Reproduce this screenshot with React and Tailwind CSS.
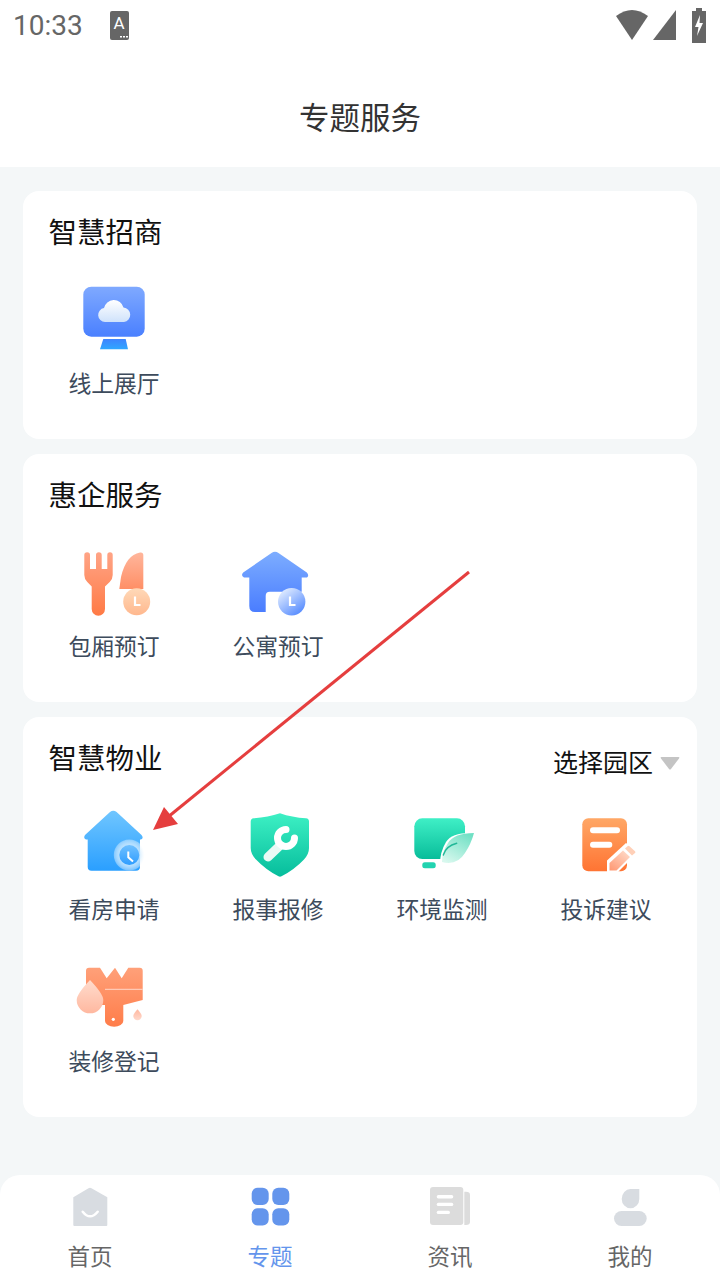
const Grad = ({ id, a, b, x1 = 0.5, y1 = 0, x2 = 0.5, y2 = 1 }) => (
  <linearGradient id={id} x1={x1} y1={y1} x2={x2} y2={y2}>
    <stop offset="0" stopColor={a} />
    <stop offset="1" stopColor={b} />
  </linearGradient>
);

const Box = ({ children, defs }) => (
  <svg width="80" height="80" viewBox="0 0 80 80" className="block">
    <defs>{defs}</defs>
    {children}
  </svg>
);

const Monitor = () => (
  <Box defs={<>
    <Grad id="m1" a="#7fa9ff" b="#4a80ff" />
    <Grad id="m2" a="#ffffff" b="#cfe2fb" />
    <Grad id="m3" a="#3f83ff" b="#2fa8ff" />
  </>}>
    <rect x="9.3" y="10.7" width="61.4" height="50" rx="8" fill="url(#m1)" />
    <path d="M31 46a7 7 0 0 1-1-13.9 10 10 0 0 1 19.5-.6 7.3 7.3 0 0 1 .5 14.5z" fill="url(#m2)" />
    <path d="M29.3 63h22.4l2.3 10.3H26z" fill="url(#m3)" />
  </Box>
);

const Cutlery = () => (
  <Box defs={<>
    <Grad id="c1" a="#ffa486" b="#ff7a45" />
    <Grad id="c2" a="#ffb69c" b="#ff8f66" />
    <Grad id="c3" a="#ffd9b8" b="#ffb88e" />
  </>}>
    <path d="M10.3 16a2.85 2.85 0 0 1 5.7 0V30h6V16a2.85 2.85 0 0 1 5.7 0V30h5.6V16a2.7 2.7 0 0 1 5.4 0V36q0 4-3 7l-4.7 4.5V70a6.65 6.65 0 0 1-13.3 0V47.5L13.3 43q-3-3-3-7z" fill="url(#c1)" />
    <path d="M66 13.5Q52 16 47 38L45.3 50H69.3V16q0-3-3.3-2.5z" fill="url(#c2)" />
    <circle cx="62.7" cy="62.7" r="13.5" fill="url(#c3)" />
    <path d="M61 57.5V66h5.5" fill="none" stroke="#fff" strokeWidth="2.2" />
  </Box>
);

const HouseBlue = () => (
  <Box defs={<>
    <Grad id="h1" a="#7dadff" b="#4a7dff" />
    <Grad id="h2" a="#dbe8ff" b="#5b8fff" x1="0.2" y1="0.1" x2="0.8" y2="0.9" />
  </>}>
    <path d="M33.5 14Q37 11.5 40.5 14L68.8 33.5Q71.5 36.5 69 38.5L63.7 38.5V67Q63.7 73 58 73H17Q11.3 73 11.3 67V38.5H6Q2.5 36.5 5.2 33.5Z" fill="url(#h1)" />
    <path d="M27.7 74V56.7a4 4 0 0 1 4-4H64V74Z" fill="#fff" />
    <circle cx="53.7" cy="62.7" r="13.7" fill="url(#h2)" />
    <path d="M52 57.5V66h5.5" fill="none" stroke="#fff" strokeWidth="2.2" />
  </Box>
);

const HouseSky = () => (
  <Box defs={<>
    <Grad id="s1" a="#70c6ff" b="#2a9fff" />
    <radialGradient id="s2">
      <stop offset="0.55" stopColor="#bfe4ff" />
      <stop offset="1" stopColor="#ffffff" stopOpacity="0.35" />
    </radialGradient>
    <Grad id="s3" a="#6fc0ff" b="#2f9dff" />
  </>}>
    <path d="M36 10Q39.3 7.5 42.6 10L67.5 33Q70 36 67 37.5H66V65Q66 68.7 62 68.7H17.5Q13.7 68.7 13.7 65V37.5H12Q9 36 11 33Z" fill="url(#s1)" />
    <circle cx="55.3" cy="53" r="15.5" fill="url(#s2)" />
    <circle cx="55.3" cy="53" r="10" fill="url(#s3)" />
    <path d="M54.3 49.5V55.3L59 59.5" fill="none" stroke="#fff" strokeWidth="2" />
  </Box>
);

const Shield = () => (
  <Box defs={<>
    <Grad id="d1" a="#3df0c4" b="#06bd9c" />
  </>}>
    <path d="M42 11.3Q54 15.5 68 16.3Q71 16.5 71 19.5V46Q71 52 66 57.5Q56 68 43.5 74.3Q42 75 40.5 74.3Q28 68 18 57.5Q12.7 52 12.7 46V19.5Q12.7 16.5 15.7 16.3Q30 15.5 42 11.3Z" fill="url(#d1)" />
    <path d="M30 55L42 43.5" stroke="#e9faf5" strokeWidth="9" strokeLinecap="round" />
    <path d="M48 27.5A8.5 8.5 0 1 0 56.5 36" fill="none" stroke="#ffffff" strokeWidth="7" strokeLinecap="round" />
  </Box>
);

const Leaf = () => (
  <Box defs={<>
    <Grad id="l1" a="#3fefc6" b="#08bd9a" />
    <Grad id="l2" a="#6fe0c4" b="#d8f8ee" x1="0.8" y1="0" x2="0.2" y2="1" />
  </>}>
    <rect x="12.3" y="16.3" width="50.7" height="40.7" rx="8" fill="url(#l1)" />
    <rect x="20.3" y="60.3" width="13.4" height="6" rx="2.5" fill="#22d3b0" />
    <path d="M72 31Q50 30 44 40Q38 50 38 62Q55 66 64 52Q70 42 72 31Z" fill="#fff" />
    <path d="M72 31Q52 31 46 41Q40 50 40 60Q55 64 63 51Q69 42 72 31Z" fill="url(#l2)" />
    <path d="M41.3 53Q44 44 54.7 41.3" fill="none" stroke="#22b898" strokeWidth="1.4" strokeLinecap="round" />
  </Box>
);

const Note = () => (
  <Box defs={<>
    <Grad id="n1" a="#ffa766" b="#ff7433" />
    <Grad id="n2" a="#ff9a75" b="#ffdccb" x1="0.1" y1="1" x2="0.9" y2="0" />
  </>}>
    <rect x="16.3" y="16.3" width="44.7" height="53" rx="6" fill="url(#n1)" />
    <rect x="24" y="25.3" width="30" height="6" rx="3" fill="#fff" />
    <rect x="24" y="39.7" width="22.3" height="6" rx="3" fill="#fff" />
    <path d="M41 70V58.5L60 41L72 50L51 71Z" fill="#fff" />
    <path d="M43.5 68.5V61L57 48.5L64 55L50.5 68.5Z" fill="url(#n2)" />
    <path d="M59 46.5L61.5 44.2Q62.5 43.5 63.5 44.3L69 49.2Q70 50.2 69 51L66 53.5Z" fill="#ffd0b8" />
  </Box>
);

const Brush = () => (
  <Box defs={<>
    <Grad id="b1" a="#ffa079" b="#ff7d4a" />
    <Grad id="b2" a="#ffdccd" b="#ffb8a0" />
    <Grad id="b3" a="#ffb79f" b="#ffd9cc" />
  </>}>
    <path d="M15 13.7H26L32.7 24.3L41 13.7L47.7 24.3L54.3 13.7H65.7Q68.7 13.7 68.7 16.7V46L49.3 51V67a9 5.7 0 0 1-18.3 0V51H20Q12 51 12 43V16.7Q12 13.7 15 13.7Z" fill="url(#b1)" />
    <path d="M31 35.3H68.7" stroke="#ffd8c8" strokeWidth="1" />
    <circle cx="39.3" cy="65.3" r="1.6" fill="#fff" />
    <path d="M16 26Q29.3 40 29.3 46A13.3 13.3 0 0 1 2.7 46Q2.7 40 16 26Z" fill="url(#b2)" />
    <path d="M63.5 55.3Q67.7 60 67.7 62A4.2 4.2 0 0 1 59.3 62Q59.3 60 63.5 55.3Z" fill="url(#b3)" />
  </Box>
);

const Item = ({ icon, label }) => (
  <div className="flex flex-col items-center">
    {icon}
    <div className="mt-[11px] mb-[1px] h-[32px] leading-[32px] text-[22.8px] text-[#3d4b5c] whitespace-nowrap">{label}</div>
  </div>
);

const TabBox = ({ children }) => (
  <svg width="50" height="50" viewBox="0 0 50 50" className="block">{children}</svg>
);

const Tab = ({ icon, label, active }) => (
  <div className="flex-1 flex flex-col items-center">
    {icon}
    <div className={active ? "mt-[7px] leading-[32px] text-[22.5px] text-[#6495ec]" : "mt-[7px] leading-[32px] text-[22.5px] text-[#666666]"}>{label}</div>
  </div>
);

export default function App() {
  return (
    <div className="relative w-[720px] h-[1280px] overflow-hidden flex flex-col bg-[#f4f7f8] font-['Noto_Sans_CJK_SC',sans-serif]">
      <header className="bg-white h-[167px] shrink-0">
        <div className="h-[50px] flex items-center pl-[13px] pr-[14px]">
          <span className="font-['Roboto',sans-serif] text-[28px] text-[#666666] leading-none mt-[1px]">10:33</span>
          <svg width="19" height="29" viewBox="0 0 19 29" className="ml-[27px]">
            <rect width="19" height="29" rx="2" fill="#666" />
            <text x="9" y="18" textAnchor="middle" fontSize="17" fontFamily="Roboto, sans-serif" fill="#fff">A</text>
            <path d="M10 25h2v1.5h-2zM13 25h2v1.5h-2zM16 25h2v1.5h-2z" fill="#fff" />
          </svg>
          <svg width="90" height="36" viewBox="0 0 90 36" className="ml-auto">
            <path d="M0 9Q16-3 32 9L16 33Z" fill="#666" />
            <path d="M60 3V33H37Z" fill="#666" />
            <path d="M76 4h4V1h6v3h4v32H76Z" fill="#666" />
            <path d="M84 8L79 20h3.5L81 29L87 16h-3.5Z" fill="#fff" />
          </svg>
        </div>
        <div className="pt-[17px] h-[117px] flex justify-center">
          <h1 className="text-[30.5px] leading-[99px] h-[99px] font-normal text-[#333333]">专题服务</h1>
        </div>
      </header>

      <main className="px-[23px] pt-[24px] flex flex-col gap-[15px]">
        <section className="h-[248px] bg-white rounded-[16px] pt-[20px]">
          <h2 className="px-[25.5px] text-[28.5px] leading-[40px] font-normal text-[#111111]">智慧招商</h2>
          <div className="mt-[25px] px-[9px] grid grid-cols-4">
            <Item icon={<Monitor />} label="线上展厅" />
          </div>
        </section>
        <section className="h-[248px] bg-white rounded-[16px] pt-[20px]">
          <h2 className="px-[25.5px] text-[28.5px] leading-[40px] font-normal text-[#111111]">惠企服务</h2>
          <div className="mt-[25px] px-[9px] grid grid-cols-4">
            <Item icon={<Cutlery />} label="包厢预订" />
            <Item icon={<HouseBlue />} label="公寓预订" />
          </div>
        </section>
        <section className="h-[400px] bg-white rounded-[16px] pt-[20px]">
          <div className="flex justify-between h-[40px] pl-[25.5px] pr-[17px]">
            <h2 className="text-[28.5px] leading-[40px] font-normal text-[#111111]">智慧物业</h2>
            <div className="flex items-center mt-[5px] h-[40px]">
              <span className="text-[25px] leading-[40px] -mt-[2px] text-[#111111]">选择园区</span>
              <svg width="20" height="13" viewBox="0 0 20 13" className="ml-[7px] mt-[3px]">
                <path d="M1.5 0H18.5Q20 0 19 1.5L11 12Q10 13 9 12L1 1.5Q0 0 1.5 0Z" fill="#c4c4c4" />
              </svg>
            </div>
          </div>
          <div className="mt-[25px] px-[9px] grid grid-cols-4 gap-y-[28px]">
            <Item icon={<HouseSky />} label="看房申请" />
            <Item icon={<Shield />} label="报事报修" />
            <Item icon={<Leaf />} label="环境监测" />
            <Item icon={<Note />} label="投诉建议" />
            <Item icon={<Brush />} label="装修登记" />
          </div>
        </section>
      </main>

      <nav className="mt-auto h-[105px] bg-white rounded-t-[20px] flex pt-[7px]">
        <Tab label="首页" icon={
          <TabBox>
            <path d="M23.5 6.2Q25 5.4 26.5 6.2L42.3 15.3V43a1 1 0 0 1-1 1H9.3a1 1 0 0 1-1-1V15.3Z" fill="#d8dce1" />
            <path d="M17.7 29.7Q25 39 32.7 29.7" fill="none" stroke="#fff" strokeWidth="2.5" strokeLinecap="round" />
          </TabBox>
        } />
        <Tab active label="专题" icon={
          <TabBox>
            <rect x="6.7" y="5.7" width="17" height="17.3" rx="6" fill="#6495ec" />
            <rect x="27.3" y="5.7" width="17" height="17.3" rx="6" fill="#6495ec" />
            <rect x="6.7" y="26.3" width="17" height="17.3" rx="6" fill="#6495ec" />
            <rect x="27.3" y="26.3" width="17" height="17.3" rx="6" fill="#6495ec" />
          </TabBox>
        } />
        <Tab label="资讯" icon={
          <TabBox>
            <rect x="5" y="5" width="33.3" height="38" rx="3" fill="#dcdcdc" />
            <path d="M39.3 9.7H41Q45 9.7 45 13V40Q45 43 41 43H39.3Z" fill="#dcdcdc" />
            <rect x="11.7" y="13" width="16.6" height="3.4" rx="1.7" fill="#fff" />
            <rect x="11.7" y="20.7" width="16.6" height="3.4" rx="1.7" fill="#fff" />
            <rect x="11.7" y="28.7" width="13.3" height="3.4" rx="1.7" fill="#fff" />
          </TabBox>
        } />
        <Tab label="我的" icon={
          <TabBox>
            <path d="M25.5 7H34.3V17a8.8 9.3 0 1 1-17.6 0a8.8 10 0 0 1 8.8-10Z" fill="#d8dce1" />
            <rect x="9" y="29" width="32.7" height="15" rx="7.5" fill="#d8dce1" />
          </TabBox>
        } />
      </nav>

      <svg width="720" height="1280" viewBox="0 0 720 1280" className="absolute inset-0 pointer-events-none">
        <path d="M469 572L168 817" stroke="#e53e3e" strokeWidth="3" fill="none" />
        <path d="M153 830L164 807L178 824Z" fill="#e53e3e" />
      </svg>
    </div>
  );
}
